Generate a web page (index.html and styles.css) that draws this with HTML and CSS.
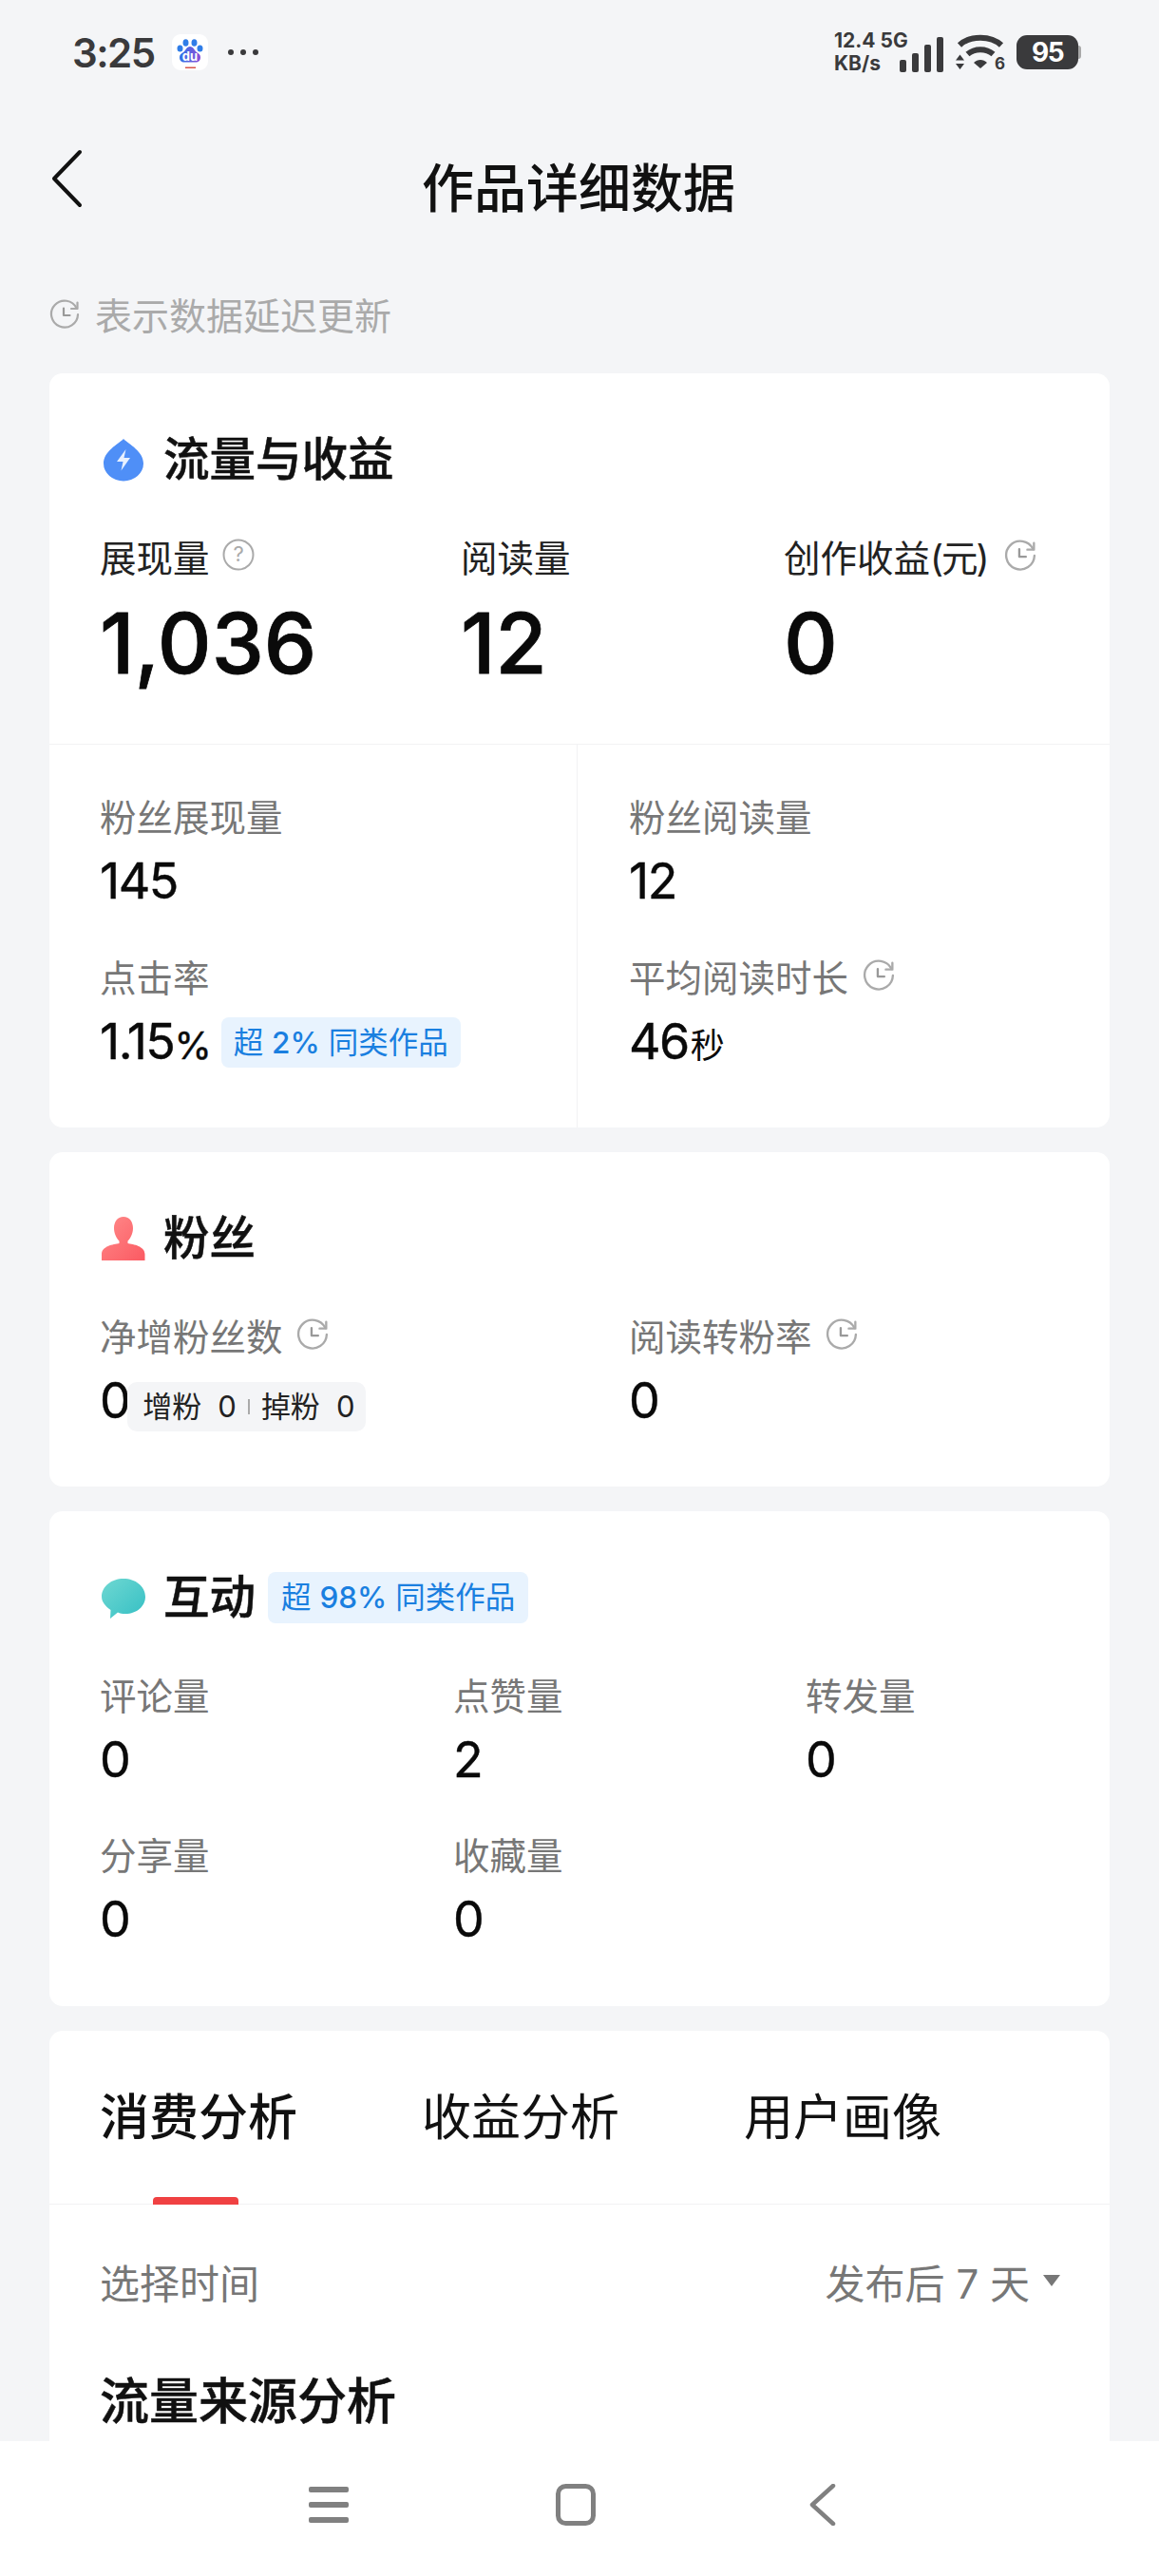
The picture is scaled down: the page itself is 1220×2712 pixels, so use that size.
FILE: index.html
```html
<!DOCTYPE html>
<html lang="zh-CN">
<head>
    <meta charset="UTF-8">
    <meta name="viewport" content="width=device-width, initial-scale=1.0">
    <title>作品详细数据</title>
    <link rel="stylesheet" href="styles.css">
</head>
<body>
    <svg class="defs" width="0" height="0">
        <defs>
            <symbol id="clock" viewBox="0 0 32 32">
                <path d="M28.6 9.5A14 14 0 1 0 30 16" fill="none" stroke="#aaa" stroke-width="2.2" stroke-linecap="round"/>
                <path d="M29.5 3.5V10h-6.5" fill="none" stroke="#aaa" stroke-width="2.2" stroke-linecap="round" stroke-linejoin="round"/>
                <path d="M15 9.5V17h6.5" fill="none" stroke="#999" stroke-width="2.2" stroke-linecap="round" stroke-linejoin="round"/>
            </symbol>
            <linearGradient id="personGrad" x1="0" y1="0" x2="1" y2="1">
                <stop offset="0" stop-color="#ff8a8a"/>
                <stop offset="1" stop-color="#fb5a62"/>
            </linearGradient>
            <linearGradient id="chatGrad" x1="0" y1="0" x2="1" y2="1">
                <stop offset="0" stop-color="#6fd8d2"/>
                <stop offset="1" stop-color="#35bfc4"/>
            </linearGradient>
            <linearGradient id="duGrad" x1="0" y1="0" x2="1" y2="0">
                <stop offset="0" stop-color="#2f74e8"/>
                <stop offset="1" stop-color="#8a4fd8"/>
            </linearGradient>
        </defs>
    </svg>

    <div class="status-bar">
        <div class="status-left">
            <span class="clock-time">3:25</span>
            <svg class="baidu" viewBox="0 0 38 38">
                <rect width="38" height="38" rx="9" fill="#fff"/>
                <ellipse cx="14.500" cy="9" rx="3" ry="3.800" fill="#2f7de8"/>
                <ellipse cx="23.500" cy="9" rx="3" ry="3.800" fill="#2f7de8"/>
                <ellipse cx="8.500" cy="15" rx="3" ry="3.600" fill="#2f7de8"/>
                <ellipse cx="29.500" cy="15" rx="3" ry="3.600" fill="#2f7de8"/>
                <path d="M19 13c3.500 0 4.500 4 7 6 3 1.500 4 3 4 5.500 0 3-2 5-5 5H13c-3 0-5-2-5-5 0-2.500 1-4 4-5.500 2.500-2 3.500-6 7-6z" fill="url(#duGrad)"/>
                <text x="19" y="28" class="baidu-text" text-anchor="middle">du</text>
                <rect x="14" y="34.500" width="11" height="1.500" fill="#d8544a"/>
            </svg>
            <span class="dots"><i></i><i></i><i></i></span>
        </div>
        <div class="status-right">
            <div class="net-speed"><span>12.4 5G</span><span>KB/s</span></div>
            <svg class="signal" viewBox="0 0 48 37">
                <rect x="1" y="24" width="7" height="13" rx="2" fill="#3a3a3c"/>
                <rect x="14" y="17" width="7" height="20" rx="2" fill="#3a3a3c"/>
                <rect x="27" y="8" width="7" height="29" rx="2" fill="#3a3a3c"/>
                <rect x="40" y="0" width="7" height="37" rx="2" fill="#3a3a3c"/>
            </svg>
            <svg class="wifi" viewBox="0 0 52 38">
                <path d="M4 11.500C15 1 37 1 48 11.500" fill="none" stroke="#3a3a3c" stroke-width="6" stroke-linecap="butt"/>
                <path d="M12.500 21C20 14.500 32 14.500 39.500 21" fill="none" stroke="#3a3a3c" stroke-width="6"/>
                <path d="M19 30c4-4 10-4 14 0l-7 6z" fill="#3a3a3c"/>
                <path d="M4.500 21.500l4.500 6H0zM4.500 37l-4.500-6h9z" fill="#3a3a3c"/>
                <text x="41" y="37" class="wifi-six">6</text>
            </svg>
            <div class="battery">
                <span class="battery-body">95</span>
                <span class="battery-tip"></span>
            </div>
        </div>
    </div>

    <div class="main">
        <div class="top-bar">
            <svg class="back" viewBox="0 0 34 62">
                <path d="M31 3L4 31l27 28" fill="none" stroke="#111" stroke-width="4" stroke-linecap="round" stroke-linejoin="round"/>
            </svg>
            <h1 class="page-title">作品详细数据</h1>
        </div>

        <div class="delay-note">
            <svg class="icon-clock icon-clock-note"><use href="#clock"/></svg>
            <span>表示数据延迟更新</span>
        </div>

        <section class="card card-flow">
            <div class="card-main">
                <div class="card-head">
                    <svg class="head-icon" viewBox="0 0 44 46">
                        <path d="M22 1C28 7 43 14 43 27a21 18.500 0 0 1-42 0C1 14 16 7 22 1z" fill="#4f8ff7"/>
                        <path d="M24.500 12L15 25h6.500l-2 9.500L29 21h-6.500z" fill="#e8f1ff"/>
                    </svg>
                    <h2 class="card-title">流量与收益</h2>
                </div>
                <div class="big-grid">
                    <div>
                        <div class="big-label">展现量
                            <svg class="icon-help" viewBox="0 0 34 34">
                                <circle cx="17" cy="17" r="15.500" fill="none" stroke="#aaa" stroke-width="2"/>
                                <text x="17" y="24" class="help-mark" text-anchor="middle">?</text>
                            </svg>
                        </div>
                        <div class="big-value">1,036</div>
                    </div>
                    <div>
                        <div class="big-label">阅读量</div>
                        <div class="big-value">12</div>
                    </div>
                    <div>
                        <div class="big-label">创作收益<span class="paren">(元)</span>
                            <svg class="icon-clock icon-clock-wide"><use href="#clock"/></svg>
                        </div>
                        <div class="big-value">0</div>
                    </div>
                </div>
            </div>
            <div class="flow-detail">
                <div class="flow-left">
                    <div class="label">粉丝展现量</div>
                    <div class="value">145</div>
                    <div class="label label-next">点击率</div>
                    <div class="value">1.15<span class="unit">%</span><span class="tag tag-rate">超 <b>2%</b> 同类作品</span></div>
                </div>
                <div class="flow-right">
                    <div class="label">粉丝阅读量</div>
                    <div class="value">12</div>
                    <div class="label label-next">平均阅读时长
                        <svg class="icon-clock"><use href="#clock"/></svg>
                    </div>
                    <div class="value">46<span class="unit unit-sec">秒</span></div>
                </div>
            </div>
        </section>

        <section class="card card-fans">
            <div class="card-head">
                <svg class="head-icon" viewBox="0 0 46 46">
                    <path d="M23 0c6.500 0 10 5.500 10 12 0 6-3 11-5.500 13.500V28c6 1 18 3 18 11.500V46H0v-6.500C0 31 12 29 18.500 28v-2.500C16 23 13 18 13 12 13 5.500 16.500 0 23 0z" fill="url(#personGrad)"/>
                </svg>
                <h2 class="card-title">粉丝</h2>
            </div>
            <div class="fans-grid">
                <div>
                    <div class="label">净增粉丝数
                        <svg class="icon-clock"><use href="#clock"/></svg>
                    </div>
                    <div class="value value-row">0<span class="fans-chip"><span>增粉</span><span class="chip-num">0</span><i class="chip-sep"></i><span>掉粉</span><span class="chip-num">0</span></span></div>
                </div>
                <div>
                    <div class="label">阅读转粉率
                        <svg class="icon-clock"><use href="#clock"/></svg>
                    </div>
                    <div class="value">0</div>
                </div>
            </div>
        </section>

        <section class="card card-action">
            <div class="card-head">
                <svg class="head-icon" viewBox="0 0 46 46">
                    <path d="M23 3c12.500 0 23 8 23 19 0 10-9 18-21 18-3 0-6-.5-8-1.500L9 45l.5-9C4 32 0 27.500 0 22 0 11 10.500 3 23 3z" fill="url(#chatGrad)"/>
                </svg>
                <h2 class="card-title">互动</h2>
                <span class="tag tag-head">超 <b>98%</b> 同类作品</span>
            </div>
            <div class="action-grid">
                <div><div class="label">评论量</div><div class="value">0</div></div>
                <div><div class="label">点赞量</div><div class="value">2</div></div>
                <div><div class="label">转发量</div><div class="value">0</div></div>
                <div><div class="label">分享量</div><div class="value">0</div></div>
                <div><div class="label">收藏量</div><div class="value">0</div></div>
            </div>
        </section>

        <section class="card card-tabs">
            <div class="tabs">
                <div class="tab tab-active">消费分析</div>
                <div class="tab">收益分析</div>
                <div class="tab">用户画像</div>
            </div>
            <div class="time-row">
                <span class="time-label">选择时间</span>
                <span class="time-pick">发布后 7 天<i class="caret"></i></span>
            </div>
            <h2 class="source-title">流量来源分析</h2>
        </section>
    </div>

    <div class="nav-bar">
        <svg class="nav-menu" viewBox="0 0 42 38">
            <rect x="0" y="0" width="42" height="6" rx="2" fill="#808080"/>
            <rect x="0" y="16" width="42" height="6" rx="2" fill="#808080"/>
            <rect x="0" y="32" width="42" height="6" rx="2" fill="#808080"/>
        </svg>
        <svg class="nav-home" viewBox="0 0 42 44">
            <rect x="2.500" y="2.500" width="37" height="39" rx="8" fill="none" stroke="#808080" stroke-width="5"/>
        </svg>
        <svg class="nav-back" viewBox="0 0 28 44">
            <path d="M25 2L3 22l22 20" fill="none" stroke="#808080" stroke-width="4.500" stroke-linecap="round" stroke-linejoin="round"/>
        </svg>
    </div>
</body>
</html>
```

FILE: styles.css
```css
* {
    box-sizing: border-box;
}
html, body {
    margin: 0;
    padding: 0;
}
body {
    width: 1220px;
    height: 2712px;
    display: flex;
    flex-direction: column;
    overflow: hidden;
    background-color: #f4f5f7;
    color: #111;
    font-family: Inter, "Noto Sans CJK SC", sans-serif;
}
h1, h2 {
    margin: 0;
}
.defs {
    position: absolute;
}

/* status bar */
.status-bar {
    height: 110px;
    flex-shrink: 0;
    padding: 0 82px 0 76px;
    display: flex;
    justify-content: space-between;
    align-items: center;
}
.status-left {
    display: flex;
    align-items: center;
}
.clock-time {
    font-size: 42px;
    font-weight: 600;
    color: #3a3a3c;
    letter-spacing: -1.5px;
}
.baidu {
    width: 38px;
    height: 38px;
    margin-left: 18px;
}
.baidu-text {
    font-size: 13px;
    font-weight: 700;
    fill: #fff;
}
.dots {
    display: flex;
    gap: 7px;
    margin-left: 21px;
}
.dots i {
    width: 6px;
    height: 6px;
    border-radius: 50%;
    background-color: #3a3a3c;
}
.status-right {
    display: flex;
    align-items: center;
}
.net-speed {
    display: flex;
    flex-direction: column;
    width: 74px;
    font-size: 21px;
    line-height: 24px;
    font-weight: 700;
    color: #3a3a3c;
    white-space: nowrap;
}
.signal {
    width: 48px;
    height: 37px;
    margin-left: -6px;
    align-self: flex-end;
    margin-bottom: 3px;
}
.wifi {
    width: 52px;
    height: 38px;
    margin-left: 12px;
}
.wifi-six {
    font-size: 17px;
    font-weight: 700;
    fill: #3a3a3c;
}
.battery {
    display: flex;
    align-items: center;
    margin-left: 12px;
}
.battery-body {
    width: 65px;
    height: 36px;
    border-radius: 11px;
    background-color: #3a3a3c;
    color: #fff;
    font-size: 28px;
    font-weight: 700;
    line-height: 36px;
    letter-spacing: -1.5px;
    text-align: center;
}
.battery-tip {
    width: 3px;
    height: 14px;
    border-radius: 0 3px 3px 0;
    background-color: #a8a8a8;
}

/* top bar */
.main {
    flex: 1;
    overflow: hidden;
}
.top-bar {
    height: 170px;
    display: flex;
    align-items: center;
    justify-content: center;
    position: relative;
}
.back {
    position: absolute;
    left: 53px;
    top: 47px;
    width: 34px;
    height: 62px;
}
.page-title {
    font-size: 55px;
    font-weight: 500;
    color: #111;
    margin-top: -2px;
    margin-right: 2px;
}
.delay-note {
    height: 50px;
    margin: 25px 0 38px 52px;
    display: flex;
    align-items: center;
    gap: 16px;
    font-size: 39px;
    color: #aaa;
}

/* cards */
.card {
    margin: 0 52px 26px;
    background-color: #fff;
    border-radius: 14px;
    overflow: hidden;
}
.card-main {
    padding: 61px 0 56px 53px;
    border-bottom: 1px solid #f2f2f4;
}
.card-head {
    height: 60px;
    display: flex;
    align-items: center;
}
.head-icon {
    width: 46px;
    height: 46px;
    flex-shrink: 0;
    margin-left: 2px;
}
.card-title {
    margin-left: 19px;
    font-size: 48.5px;
    font-weight: 500;
    -webkit-text-stroke: 0.5px #111;
    color: #111;
    line-height: 60px;
}
.big-grid {
    display: grid;
    grid-template-columns: 380px 340px 1fr;
    margin-top: 49px;
}
.big-label {
    height: 50px;
    line-height: 50px;
    font-size: 38.5px;
    color: #222;
    white-space: nowrap;
}
.paren {
    letter-spacing: -2px;
}
.big-value {
    height: 100px;
    line-height: 100px;
    margin-top: 14px;
    font-size: 88px;
    font-weight: 500;
    -webkit-text-stroke: 0.8px #0a0a0a;
    color: #0a0a0a;
}
.flow-detail {
    display: grid;
    grid-template-columns: 556px 1fr;
}
.flow-left {
    padding: 52px 0 60px 53px;
    border-right: 1px solid #f2f2f4;
}
.flow-right {
    padding: 52px 0 60px 54px;
}
.label {
    height: 50px;
    line-height: 50px;
    font-size: 38.5px;
    color: #777;
    white-space: nowrap;
}
.label-next {
    margin-top: 47px;
}
.value {
    height: 60px;
    line-height: 60px;
    margin-top: 12px;
    font-size: 52px;
    font-weight: 400;
    -webkit-text-stroke: 0.4px #0a0a0a;
    letter-spacing: -1.5px;
    color: #0a0a0a;
    white-space: nowrap;
    display: flex;
    align-items: center;
}
.unit {
    font-size: 40px;
    font-weight: 400;
    letter-spacing: 0;
    margin-top: 8px;
}
.unit-sec {
    font-size: 36px;
    -webkit-text-stroke: 0;
    margin-left: 2px;
}
.icon-clock {
    width: 34px;
    height: 34px;
    vertical-align: 0;
    margin-left: 4px;
}
.icon-clock-wide {
    margin-left: 7px;
}
.icon-clock-note {
    width: 32px;
    height: 32px;
    margin-left: 0;
    vertical-align: 0;
    position: relative;
    top: 1px;
}
.icon-help {
    width: 34px;
    height: 34px;
    vertical-align: 1px;
    margin-left: 3px;
}
.help-mark {
    font-size: 22px;
    fill: #aaa;
}

/* tags */
.tag {
    display: inline-block;
    background-color: #e8f3fe;
    border-radius: 8px;
    color: #1a7fe0;
    font-weight: 400;
    letter-spacing: 0;
    -webkit-text-stroke: 0;
    white-space: nowrap;
}
.tag b {
    font-weight: 500;
}
.tag-rate {
    margin-left: 10px;
    height: 53px;
    line-height: 53px;
    padding: 0 13px;
    font-size: 31.5px;
}
.tag-head {
    margin-left: 13px;
    height: 54px;
    line-height: 54px;
    padding: 0 14px;
    font-size: 31.5px;
}

/* fans */
.card-fans {
    height: 352px;
    padding: 61px 0 0 53px;
}
.fans-grid {
    display: grid;
    grid-template-columns: 557px 1fr;
    margin-top: 49px;
}
.value-row {
    align-items: center;
}
.fans-chip {
    display: flex;
    align-items: center;
    height: 52px;
    padding: 0 12px 0 16px;
    margin: 12px 0 0 -2px;
    border-radius: 10px;
    background-color: #f4f5f7;
    font-size: 31px;
    font-weight: 400;
    letter-spacing: 0;
    -webkit-text-stroke: 0;
    color: #222;
}
.chip-num {
    margin-left: 17px;
}
.chip-sep {
    width: 2px;
    height: 16px;
    margin: 0 12px;
    background-color: #aaa;
}

/* interaction */
.card-action {
    height: 521px;
    padding: 61px 0 0 53px;
}
.action-grid {
    display: grid;
    grid-template-columns: 372px 371px 1fr;
    row-gap: 46px;
    margin-top: 49px;
}

/* tabs */
.card-tabs {
    margin-bottom: 0;
    padding-bottom: 40px;
}
.tabs {
    height: 183px;
    padding-left: 53px;
    display: flex;
    gap: 131px;
    border-bottom: 1px solid #f2f2f4;
}
.tab {
    margin-top: 61px;
    height: 62px;
    line-height: 62px;
    font-size: 52px;
    color: #111;
    position: relative;
}
.tab-active {
    font-weight: 500;
}
.tab-active::after {
    content: "";
    position: absolute;
    left: 56px;
    top: 114px;
    width: 90px;
    height: 8px;
    border-radius: 4px 4px 0 0;
    background-color: #f04142;
}
.time-row {
    margin-top: 55px;
    padding: 0 52px 0 53px;
    display: flex;
    justify-content: space-between;
    align-items: center;
    height: 50px;
}
.time-label {
    font-size: 42px;
    color: #777;
}
.time-pick {
    font-size: 42px;
    color: #777;
    display: flex;
    align-items: center;
}
.caret {
    margin-left: 14px;
    width: 0;
    height: 0;
    border-left: 9px solid transparent;
    border-right: 9px solid transparent;
    border-top: 12px solid #777;
}
.source-title {
    margin: 73px 0 0 53px;
    font-size: 52px;
    font-weight: 500;
    -webkit-text-stroke: 0.5px #111;
    color: #111;
    line-height: 60px;
}

/* navigation bar */
.nav-bar {
    height: 142px;
    flex-shrink: 0;
    background-color: #fff;
    position: relative;
}
.nav-menu {
    position: absolute;
    left: 325px;
    top: 48px;
    width: 42px;
    height: 38px;
}
.nav-home {
    position: absolute;
    left: 585px;
    top: 45px;
    width: 42px;
    height: 44px;
}
.nav-back {
    position: absolute;
    left: 852px;
    top: 45px;
    width: 28px;
    height: 44px;
}
```
